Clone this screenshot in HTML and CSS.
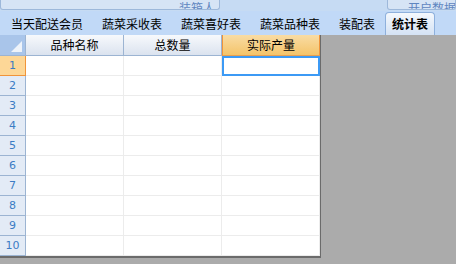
FILE: index.html
```html
<!DOCTYPE html>
<html lang="zh">
<head>
  <meta charset="UTF-8">
  <title>统计表</title>
  <link rel="stylesheet" href="styles.css">
</head>
<body>
  <div class="topbar">
    <div class="tool-btn btn-left"><span>装箱人</span></div>
    <div class="tool-btn btn-right"><span>开启数据</span></div>
  </div>
  <div class="tabs">
    <div class="tab">当天配送会员</div>
    <div class="tab">蔬菜采收表</div>
    <div class="tab">蔬菜喜好表</div>
    <div class="tab">蔬菜品种表</div>
    <div class="tab">装配表</div>
    <div class="tab active">统计表</div>
  </div>
  <div class="workspace">
    <div class="sheet" id="sheet">
      <div class="corner"></div>
      <div class="col-head">品种名称</div>
      <div class="col-head">总数量</div>
      <div class="col-head sel">实际产量</div>
    </div>
  </div>

<script>
  // 10 leere Zeilen erzeugen
  const sheet = document.getElementById('sheet');
  for (let i = 1; i <= 10; i++) {
    let html = '<div class="row-head' + (i === 1 ? ' sel' : '') + '">' + i + '</div>';
    html += '<div class="cell"></div><div class="cell"></div>';
    html += '<div class="cell' + (i === 1 ? ' current' : '') + '"></div>';
    sheet.insertAdjacentHTML('beforeend', html);
  }
</script>
</body>
</html>
```

FILE: styles.css
```css
body { margin: 0; padding: 0; width: 456px; height: 264px; overflow: hidden; background-color: #ababab; font-family: "Noto Sans CJK SC", "Liberation Sans", sans-serif; }
.topbar { height: 11px; background-color: #c6dbf3; display: flex; overflow: hidden; }
.tool-btn { box-sizing: border-box; height: 10px; background-color: #d6e4f5; border: 1px solid #9db8da; border-top: none; border-radius: 0 0 3px 3px; color: #5f86c0; font-size: 12px; line-height: 1; white-space: nowrap; overflow: hidden; display: flex; align-items: flex-end; justify-content: flex-end; }
.tool-btn span { margin-bottom: -5px; }
.btn-left { width: 224px; padding-right: 4px; margin-right: 167px; }
.btn-right { width: 70px; padding-left: 20px; justify-content: flex-start; }
.tabs { height: 24px; background-color: #c1d9f7; display: flex; align-items: flex-end; padding-left: 2px; box-sizing: border-box; }
.tab { flex-shrink: 0; white-space: nowrap; height: 22px; padding: 0 9px; font-size: 12px; line-height: 22px; color: #000; margin-right: 1px; }
.tab.active { box-sizing: border-box; height: 23px; padding: 0 6px; font-weight: bold; background: linear-gradient(#f4f8fd, #d4e2f4); border: 1px solid #8eb0dc; border-bottom: none; border-radius: 4px 4px 0 0; line-height: 21px; }
.workspace { display: flex; }
.sheet { display: grid; grid-template-columns: 26px 98px 98px 98px; grid-template-rows: 21px repeat(10, 20px); background-color: #fff; border-right: 1px solid #6b6b6b; border-bottom: 2px solid #6b6b6b; }
.corner { background-color: #a9c5ea; border-right: 1px solid #9cb4d2; border-bottom: 1px solid #9cb4d2; position: relative; }
.corner::after { content: ""; position: absolute; right: 3px; bottom: 3px; border-left: 11px solid transparent; border-bottom: 11px solid #eef3fa; }
.col-head { box-sizing: border-box; border-right: 1px solid #9cb4d2; border-bottom: 1px solid #9cb4d2; background: linear-gradient(#f7f9fc, #dbe3ef); font-size: 12px; line-height: 19px; text-align: center; }
.col-head.sel { background: linear-gradient(#f9dca4, #f4c46a); border-left: 1px solid #f0943a; border-right: 1px solid #f0943a; border-bottom: 1px solid #e8a050; }
.row-head { box-sizing: border-box; background-color: #e3ebf6; border-right: 1px solid #9cb4d2; border-bottom: 1px solid #9cb4d2; color: #3b7cc4; font-family: "DejaVu Sans", sans-serif; font-size: 11px; line-height: 19px; text-align: center; }
.row-head.sel { background-color: #fdd797; border-right: 1px solid #f0943a; border-bottom: 1px solid #f0943a; }
.cell { box-sizing: border-box; border-right: 1px solid #ececec; border-bottom: 1px solid #ececec; }
.cell.current { border: 2px solid #3c9af5; }
```
